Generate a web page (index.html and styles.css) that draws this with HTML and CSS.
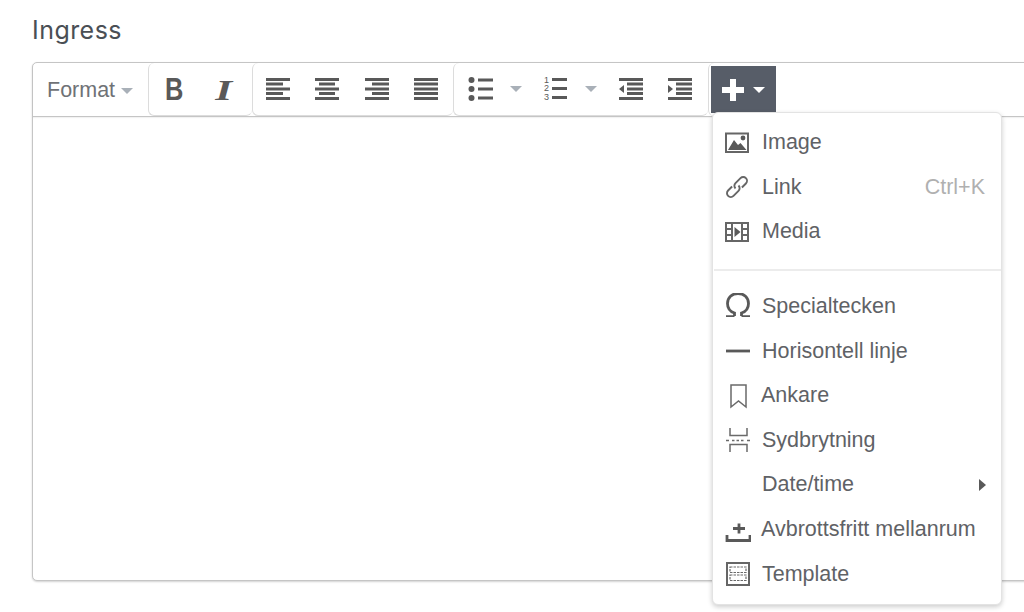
FILE: index.html
```html
<!DOCTYPE html>
<html lang="sv">
<head>
<meta charset="utf-8">
<title>Ingress</title>
<link rel="stylesheet" href="styles.css">
</head>
<body>
<div class="page">
  <label class="field-label">Ingress</label>
  <div class="editor">
    <div class="toolbar">
      <div class="group group-first">
        <button class="format">Format<span class="caret caret-muted"></span></button>
      </div>
      <div class="group group-marks">
        <button class="tool tool-b"><span class="glyph-b">B</span></button>
        <button class="tool tool-i"><span class="glyph-i">I</span></button>
      </div>
      <div class="group group-align">
        <button class="tool"><svg width="26" height="22" viewBox="0 0 26 22"><path d="M1 1.500h24M1 6h17M1 11h24M1 15.500h17M1 20.500h24" class="lines"/></svg></button>
        <button class="tool"><svg width="26" height="22" viewBox="0 0 26 22"><path d="M1 1.500h24M5 6h16M1 11h24M5 15.500h16M1 20.500h24" class="lines"/></svg></button>
        <button class="tool"><svg width="26" height="22" viewBox="0 0 26 22"><path d="M1 1.500h24M8 6h17M1 11h24M8 15.500h17M1 20.500h24" class="lines"/></svg></button>
        <button class="tool"><svg width="26" height="22" viewBox="0 0 26 22"><path d="M1 1.500h24M1 6h24M1 11h24M1 15.500h24M1 20.500h24" class="lines"/></svg></button>
      </div>
      <div class="group group-lists">
        <button class="tool tool-list"><svg width="26" height="24" viewBox="0 0 26 24"><circle cx="3.500" cy="3" r="3"/><circle cx="3.500" cy="12" r="3"/><circle cx="3.500" cy="21" r="3"/><path d="M10 3h15M10 12h15M10 21h15" class="lines"/></svg><span class="caret caret-muted"></span></button>
        <button class="tool tool-list"><svg width="26" height="26" viewBox="0 0 26 26"><text x="1" y="7" class="digit">1</text><text x="1" y="15" class="digit">2</text><text x="1" y="23.500" class="digit">3</text><path d="M9 3.500h15M9 12.500h15M9 21.500h15" class="lines"/></svg><span class="caret caret-muted"></span></button>
        <button class="tool"><svg width="26" height="22" viewBox="0 0 26 22"><path d="M1 1.500h24M9 6h16M9 11h16M9 15.500h16M1 20.500h24" class="lines"/><path d="M6 7v8L1 11z"/></svg></button>
        <button class="tool"><svg width="26" height="22" viewBox="0 0 26 22"><path d="M1 1.500h24M9 6h16M9 11h16M9 15.500h16M1 20.500h24" class="lines"/><path d="M1 7v8l5-4z"/></svg></button>
      </div>
      <div class="group group-insert">
        <button class="insert"><svg width="22" height="22" viewBox="0 0 22 22"><path d="M8 0h6v8h8v6h-8v8H8v-8H0V8h8z" fill="#fff"/></svg><span class="caret caret-white"></span></button>
      </div>
    </div>
    <div class="content"></div>
  </div>

  <div class="menu">
    <div class="menu-section">
      <div class="item"><span class="icon"><svg width="26" height="22" viewBox="0 0 26 22"><rect x="2" y="1.500" width="22" height="18.500" class="outline"/><path d="M4 18l6-10 4 5 2.500-2 6 7z"/><circle cx="19" cy="6" r="2.400"/></svg></span><span class="label">Image</span></div>
      <div class="item"><span class="icon"><svg width="26" height="26" viewBox="0 0 26 26"><path d="M11.500 14.500a3.800 3.800 0 0 1 0-5.400l5-5a3.800 3.800 0 0 1 5.400 5.400l-4 4" class="stroke"/><path d="M14.500 11.500a3.800 3.800 0 0 1 0 5.400l-5 5a3.800 3.800 0 0 1-5.400-5.400l4-4" class="stroke"/></svg></span><span class="label">Link</span><span class="shortcut">Ctrl+K</span></div>
      <div class="item"><span class="icon"><svg width="26" height="20" viewBox="0 0 26 20"><path d="M2 1h22v18H2z" class="outline"/><path d="M8 1v18M18 1v18M2 7h6M2 13h6M18 7h6M18 13h6" class="outline"/><path d="M10.500 5l6 5-6 5z"/></svg></span><span class="label">Media</span></div>
    </div>
    <div class="menu-section">
      <div class="item"><span class="icon"><svg width="26" height="26" viewBox="0 0 26 26"><path d="M9.500 23v-3C5 18.500 2.500 15 2.500 10.500 2.500 4.500 7 .500 13 .500s10.500 4 10.500 10c0 4.500-2.500 8-7 9.500v3" class="omega"/><path d="M1 23.200h8.500M16.500 23.200H25" class="feet"/></svg></span><span class="label">Specialtecken</span></div>
      <div class="item"><span class="icon"><svg width="26" height="4" viewBox="0 0 26 4"><path d="M1 2h24" class="lines"/></svg></span><span class="label">Horisontell linje</span></div>
      <div class="item"><span class="icon"><svg width="26" height="26" viewBox="0 0 26 26"><path d="M6 2h15v22l-7.500-6L6 24z" class="thin"/></svg></span><span class="label label-tight">Ankare</span></div>
      <div class="item"><span class="icon"><svg width="26" height="26" viewBox="0 0 26 26"><path d="M5 1v7.500h17V1M5 25v-7.500h17V25M1 13.500h3M7 13.500h2.500M11.500 13.500h2.500M16 13.500h2.500M22 13.500h3" class="thin"/></svg></span><span class="label">Sydbrytning</span></div>
      <div class="item"><span class="icon"></span><span class="label">Date/time</span><span class="arrow"></span></div>
      <div class="item"><span class="icon icon-low"><svg width="26" height="20" viewBox="0 0 26 20"><path d="M2 13v5.500h23V13" class="bold"/><path d="M14 1.500v10M8 6.500h12" class="bold"/></svg></span><span class="label label-tight">Avbrottsfritt mellanrum</span></div>
      <div class="item"><span class="icon"><svg width="26" height="24" viewBox="0 0 26 24"><rect x="2" y="1" width="22" height="22" class="outline"/><rect x="5" y="5" width="16" height="5.500" class="dash"/><rect x="5" y="13" width="16" height="5.500" class="dash"/></svg></span><span class="label">Template</span></div>
    </div>
  </div>
</div>
</body>
</html>
```
FILE: styles.css
```css
* { box-sizing: border-box; }
html, body { margin: 0; padding: 0; background: #fff; }
body { width: 1024px; height: 612px; overflow: hidden; font-family: "Liberation Sans", Arial, sans-serif; }
.page { position: relative; width: 1024px; height: 612px; padding: 15px 0 0 32px; overflow: hidden; }
.field-label { display: block; height: 47px; font-family: "Inter", "Open Sans", sans-serif; font-size: 25px; line-height: 30px; color: #4a4f55; letter-spacing: .45px; }

.editor { width: 1010px; height: 519px; border: 1px solid #c5c5c5; border-radius: 5px; box-shadow: 0 1px 2px rgba(0,0,0,.18); display: flex; flex-direction: column; background: #fff; }
.toolbar { height: 54px; flex: none; display: flex; border-bottom: 1px solid #c5c5c5; box-shadow: 0 1px 1px rgba(0,0,0,.05); }
.content { flex: 1; }

.group { display: flex; align-items: center; height: 53px; border-left: 1px solid #dcdcdc; border-bottom: 1px solid #dcdcdc; border-radius: 6px 0 6px 6px; padding-left: 1px; }
.group-first { width: 115px; border: 0; border-radius: 0; padding-left: 14px; }
.group-marks { width: 104px; }
.group-align { width: 201px; }
.group-lists { width: 255px; }
.group-insert { border-bottom: 0; padding: 3px 0 0 2px; align-items: flex-start; }

button { appearance: none; border: 0; background: none; padding: 0; margin: 0; font-family: inherit; color: #595959; display: flex; align-items: center; }
button svg { fill: #595959; }
.format { font-size: 21.500px; color: #6f7276; height: 40px; padding-top: 2px; }
.caret { display: inline-block; width: 0; height: 0; border-left: 6.500px solid transparent; border-right: 6.500px solid transparent; border-top: 6.500px solid #a9b0b8; }
.format .caret { margin-left: 6px; }
.caret-white { border-top-color: #fff; margin-left: 9px; }
.tool { width: 49.500px; height: 40px; justify-content: center; }
.group-marks { padding-left: 0; }
.tool-b { width: 50px; padding-top: 2px; }
.tool-i { width: 50px; padding-top: 2px; }
.glyph-b { display: block; font-size: 31px; font-weight: 700; font-family: "Liberation Sans", sans-serif; transform: scaleX(.82); }
.glyph-i { display: block; font-size: 30px; font-style: italic; font-weight: 700; font-family: "Liberation Serif", serif; color: #595959; transform: scaleX(1.45); }
.group-align { padding-left: 0; }
.group-lists { padding-left: 2px; }
.tool-list { width: 75px; justify-content: flex-start; padding-left: 12px; }
.tool-list .caret { margin-left: 16px; }
.insert { width: 65px; height: 47px; background: #575d68; justify-content: flex-start; padding-left: 11px; }

.lines { fill: none; stroke: #595959; stroke-width: 2.800px; }
.digit { font-family: "Liberation Sans", sans-serif; font-size: 9px; fill: #595959; }

.menu { position: absolute; left: 712px; top: 112px; width: 290px; height: 493px; background: #fff; border: 1px solid #e3e3e3; border-radius: 6px; box-shadow: 0 2px 5px rgba(0,0,0,.2); padding: 7.400px 0 8px; }
.menu-section:first-child { padding-bottom: 14.600px; }
.menu-section + .menu-section { border-top: 2px solid #ececec; padding-top: 13.400px; margin-left: 1px; }
.menu-section + .menu-section .item { padding-left: 11px; }
.menu-section + .menu-section .icon { margin-right: 11px; }
.item { display: flex; align-items: center; height: 44.600px; padding: 0 15px 0 11px; font-size: 21.500px; color: #5f6266; }
.icon { width: 26px; height: 26px; margin-right: 12px; display: flex; align-items: center; justify-content: center; flex: none; }
.icon-low { align-items: flex-end; }
.icon svg { display: block; fill: #595959; }
.label { flex: 1; white-space: nowrap; }
.label-tight { margin-left: -1px; }
.shortcut { color: #b0b0b0; margin-right: 1px; }
.arrow { width: 0; height: 0; border-top: 6px solid transparent; border-bottom: 6px solid transparent; border-left: 7px solid #595959; }

.outline { fill: none; stroke: #666; stroke-width: 2px; }
.stroke { fill: none; stroke: #666; stroke-width: 1.900px; }
.omega { fill: none; stroke: #595959; stroke-width: 2.800px; }
.feet { fill: none; stroke: #595959; stroke-width: 1.800px; }
.thin { fill: none; stroke: #6a6a6a; stroke-width: 1.500px; }
.bold { fill: none; stroke: #595959; stroke-width: 2.800px; }
.dash { fill: none; stroke: #6a6a6a; stroke-width: 1.200px; stroke-dasharray: 2.500 1; }
```
